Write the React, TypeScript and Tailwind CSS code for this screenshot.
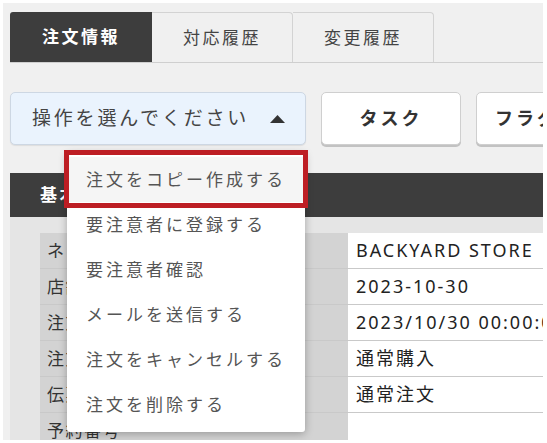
import React from 'react';

const tabs = ['注文情報', '対応履歴', '変更履歴'];

const menuItems = [
    '注文をコピー作成する',
    '要注意者に登録する',
    '要注意者確認',
    'メールを送信する',
    '注文をキャンセルする',
    '注文を削除する',
];

const rows: [string, string][] = [
    ['ネットショップ名', 'BACKYARD STORE'],
    ['店舗受注日', '2023-10-30'],
    ['注文日時', '2023/10/30 00:00:00'],
    ['注文区分', '通常購入'],
    ['伝票種別', '通常注文'],
    ['予約番号', ''],
];

const font = { fontFamily: '"Noto Sans", "Noto Sans CJK JP", sans-serif' };

function ActionMenu() {
    return (
        <div className="absolute left-[57px] top-[60px] z-10 w-[238px] bg-white rounded-[3px] py-[5px] shadow-[0_2px_8px_rgba(0,0,0,0.28)]">
            {menuItems.map((label, i) => (
                <div
                    key={label}
                    className={`h-[45px] flex items-center pl-[19px] text-[17px] tracking-[3px] text-[#555] whitespace-nowrap ${i === 0 ? 'bg-[#f5f5f5]' : ''}`}
                >
                    {label}
                </div>
            ))}
            {/* focus ring around the current item */}
            <div className="absolute -left-[3px] -top-[2px] w-[244px] h-[58px] border-[5px] border-[#bd1e24] pointer-events-none" />
        </div>
    );
}

export default function App() {
    return (
        <div className="w-[547px] h-[443px] overflow-hidden bg-white p-[3px]" style={font}>
            <div className="h-[437px] w-[540px] bg-[#f0f0f0] pl-[7px] pt-[9px] overflow-hidden">
                {/* tabs */}
                <div className="flex border-b border-[#cfcfcf]">
                    {tabs.map((t, i) => (
                        <div
                            key={t}
                            className={
                                i === 0
                                    ? 'w-[142px] h-[50px] flex items-center justify-center bg-[#3d3d3d] text-white font-bold text-[17px] tracking-[2.5px] rounded-tl-[3px]'
                                    : 'w-[141px] h-[50px] flex items-center justify-center border-t border-r border-[#d3d3d3] text-[#444] text-[17px] tracking-[2.5px] rounded-tr-[4px]'
                            }
                        >
                            {t}
                        </div>
                    ))}
                </div>

                {/* action buttons */}
                <div className="mt-[29px] flex gap-[15px] whitespace-nowrap">
                    <div className="relative">
                        <div className="w-[296px] h-[53px] flex items-center justify-between pl-[21px] pr-[20px] bg-[#eaf3fd] border border-[#cdd7e3] rounded-[5px] shadow-[0_1px_1px_rgba(0,0,0,0.08)]">
                            <span className="text-[19px] tracking-[2.8px] text-[#444]">操作を選んでください</span>
                            <svg width="15" height="8" viewBox="0 0 15 8">
                                <path d="M7.5 0 L15 8 L0 8 Z" fill="#333" />
                            </svg>
                        </div>
                        <ActionMenu />
                    </div>
                    <div className="w-[140px] h-[53px] shrink-0 flex items-center justify-center bg-white border border-[#cfcfcf] rounded-[5px] shadow-[0_2px_0_#c2c2c2] text-[18px] font-bold tracking-[3px] text-[#333]">
                        タスク
                    </div>
                    <div className="w-[140px] h-[53px] shrink-0 flex items-center pl-[18px] bg-white border border-[#cfcfcf] rounded-[5px] shadow-[0_2px_0_#c2c2c2] text-[18px] font-bold tracking-[3px] text-[#333]">
                        フラグ設定
                    </div>
                </div>

                {/* basic info panel */}
                <div className="mt-[28px]">
                    <div className="h-[44px] flex items-center pl-[30px] bg-[#3d3d3d] text-white font-bold text-[17px] tracking-[2.5px]">
                        基本情報
                    </div>
                    <div className="bg-[#e5e5e5] pt-[16px] pl-[30px]">
                        {rows.map(([label, value]) => (
                            <div key={label} className="flex h-[36px] border-b border-[#c9c9c9]">
                                <div className="w-[308px] shrink-0 bg-[#d3d3d3] pl-[7px] flex items-center text-[17px] tracking-[1.5px] text-[#333] whitespace-nowrap">
                                    {label}
                                </div>
                                <div className="flex-1 bg-white pl-[8px] flex items-center text-[18px] tracking-[2px] text-[#222] whitespace-nowrap overflow-hidden">
                                    {value}
                                </div>
                            </div>
                        ))}
                    </div>
                </div>
            </div>
        </div>
    );
}
